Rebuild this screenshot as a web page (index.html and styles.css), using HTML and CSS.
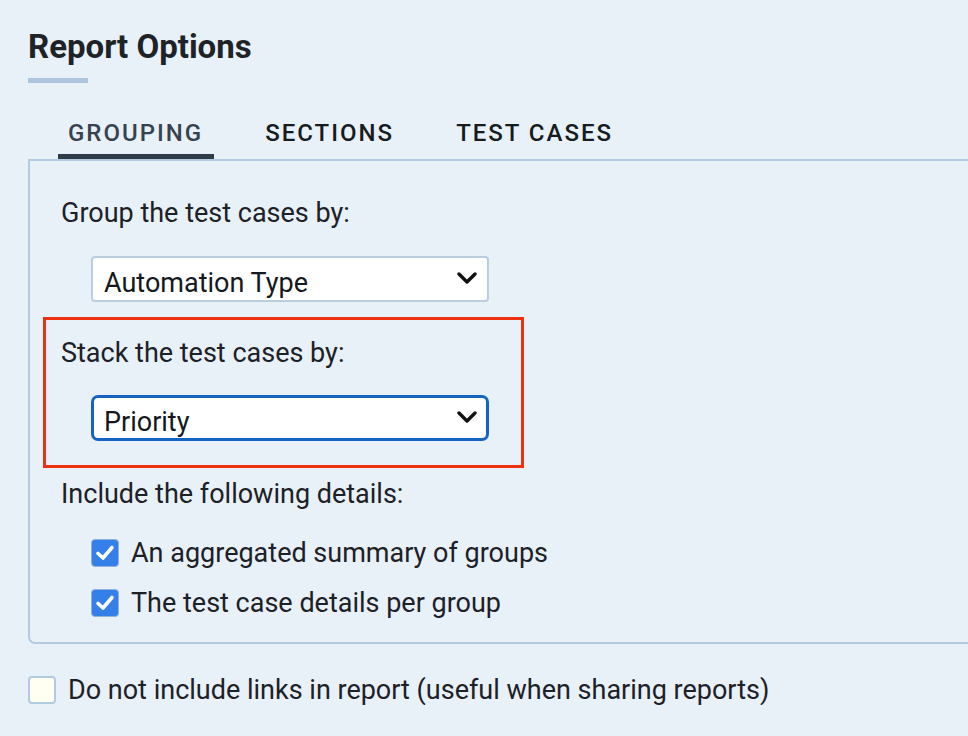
FILE: index.html
```html
<!DOCTYPE html>
<html lang="en">
<head>
    <meta charset="UTF-8">
    <meta name="viewport" content="width=device-width, initial-scale=1.0">
    <title>Report Options</title>
    <link rel="stylesheet" href="styles.css">
</head>
<body>
    <div class="page">
        <h1 class="title">Report Options</h1>
        <div class="title-bar"></div>

        <div class="tabs">
            <div class="tab active">GROUPING</div>
            <div class="tab">SECTIONS</div>
            <div class="tab">TEST CASES</div>
        </div>

        <div class="panel">
            <div class="label">Group the test cases by:</div>
            <div class="select">
                <span>Automation Type</span>
                <svg class="chevron" width="20" height="12" viewBox="0 0 20 12"><polyline points="2,2 10,10 18,2" fill="none" stroke="#111" stroke-width="3.4" stroke-linecap="round" stroke-linejoin="round"/></svg>
            </div>

            <div class="highlight">
                <div class="label">Stack the test cases by:</div>
                <div class="select focused">
                    <span>Priority</span>
                    <svg class="chevron" width="20" height="12" viewBox="0 0 20 12"><polyline points="2,2 10,10 18,2" fill="none" stroke="#111" stroke-width="3.4" stroke-linecap="round" stroke-linejoin="round"/></svg>
                </div>
            </div>

            <div class="label include">Include the following details:</div>
            <div class="check-list">
                <div class="check-row">
                    <span class="box checked"><svg width="20" height="18" viewBox="0 0 20 18"><polyline points="3,9.5 8,14 17,3.5" fill="none" stroke="#fff" stroke-width="3.6" stroke-linecap="round" stroke-linejoin="round"/></svg></span>
                    <span>An aggregated summary of groups</span>
                </div>
                <div class="check-row">
                    <span class="box checked"><svg width="20" height="18" viewBox="0 0 20 18"><polyline points="3,9.5 8,14 17,3.5" fill="none" stroke="#fff" stroke-width="3.6" stroke-linecap="round" stroke-linejoin="round"/></svg></span>
                    <span>The test case details per group</span>
                </div>
            </div>
        </div>

        <div class="check-row bottom">
            <span class="box empty"></span>
            <span>Do not include links in report (useful when sharing reports)</span>
        </div>
    </div>
</body>
</html>
```

FILE: styles.css
```css
body{
    margin: 0;
    background-color: #e8f0f8;
    font-family: Roboto, "Liberation Sans", sans-serif;
    color: #1c2127;
    overflow: hidden;
}
.page{
    padding: 0 0 0 28px;
}
.title{
    margin: 0;
    padding-top: 28px;
    font-size: 33px;
    line-height: 38px;
    font-weight: 700;
    color: #1e2328;
}
.title-bar{
    width: 60px;
    height: 5px;
    margin-top: 12px;
    background-color: #adc6dd;
}
.tabs{
    display: flex;
    gap: 41px;
    padding-left: 30px;
    margin-top: 35px;
}
.tab{
    padding: 0 11px 0 10px;
    font-size: 24px;
    font-weight: 500;
    letter-spacing: 2px;
    line-height: 30px;
    height: 36px;
    border-bottom: 5px solid transparent;
    color: #161b20;
}
.tab.active{
    color: #36434f;
    border-bottom-color: #2e3b48;
}
.panel{
    border: 2px solid #b3cbe0;
    border-right: none;
    border-radius: 0 0 0 7px;
    padding: 37px 0 24px 31px;
}
.label{
    font-size: 27px;
    line-height: 30px;
    height: 30px;
}
.select{
    display: flex;
    align-items: center;
    justify-content: space-between;
    box-sizing: border-box;
    width: 398px;
    height: 46px;
    margin: 28px 0 0 30px;
    padding: 0 10px 0 11px;
    background-color: #fff;
    border: 2px solid #bccddf;
    border-radius: 4px;
    font-size: 27px;
    color: #15191d;
}
.select span{
    padding-top: 8px;
}
.select.focused{
    border: 3px solid #1763c4;
    border-radius: 7px;
    padding: 0 9px 0 10px;
}
.chevron{
    flex-shrink: 0;
    margin-top: -2px;
}
.highlight{
    width: 460px;
    margin: 15px 0 0 -18px;
    padding: 18px 0 24px 15px;
    border: 3px solid #ee3012;
}
.highlight .select{
    margin-top: 27px;
}
.include{
    margin-top: 11px;
}
.check-list{
    display: flex;
    flex-direction: column;
    gap: 20px;
    margin: 29px 0 0 30px;
}
.check-row{
    display: flex;
    align-items: center;
    gap: 12px;
    font-size: 27px;
    line-height: 30px;
}
.box{
    display: flex;
    align-items: center;
    justify-content: center;
    box-sizing: border-box;
    width: 28px;
    height: 28px;
    border-radius: 4px;
}
.box.checked{
    background-color: #3480e8;
    border: 1px solid #8fb2dc;
}
.box.empty{
    background-color: #fffff2;
    border: 2px solid #b3cbe0;
}
.check-row.bottom{
    margin-top: 31px;
}
```
